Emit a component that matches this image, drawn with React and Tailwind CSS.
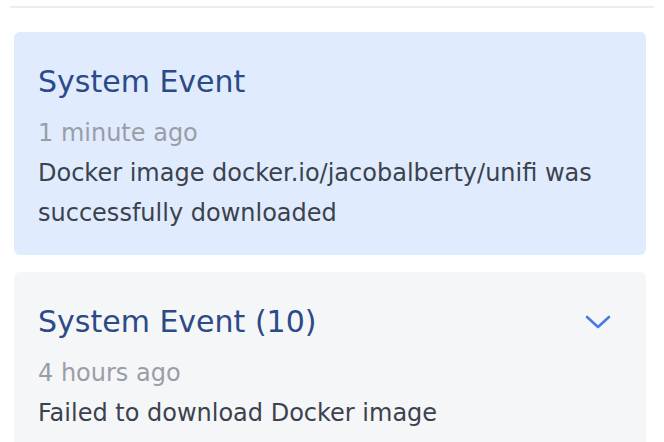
const events = [
  {
    title: "System Event",
    time: "1 minute ago",
    message: "Docker image docker.io/jacobalberty/unifi was successfully downloaded",
    highlight: true,
  },
  {
    title: "System Event (10)",
    time: "4 hours ago",
    message: "Failed to download Docker image",
    grouped: true,
  },
];

function ChevronDown() {
  return (
    <svg width="26" height="14" viewBox="0 0 26 14" fill="none" className="mr-[11px] shrink-0">
      <polyline
        points="2,2 13,12 24,2"
        stroke="#4a7be0"
        strokeWidth="2.6"
        strokeLinecap="round"
        strokeLinejoin="round"
      />
    </svg>
  );
}

export default function App() {
  return (
    <div className="w-[664px] h-[442px] overflow-hidden bg-white font-['DejaVu_Sans',sans-serif]">
      <div className="mx-[10px] mt-[6px] h-[2px] bg-[#eaedf2]" />

      <div className="ml-[14px] mr-[18px] mt-[24px] flex flex-col gap-[17px]">
        {events.map((event) => (
          <div
            key={event.title}
            className={`rounded-[6px] px-6 pt-[28px] pb-[22px] ${
              event.highlight ? "bg-[#e0ecfd]" : "bg-[#f5f6f8]"
            }`}
          >
            <div className="flex items-center justify-between mb-[9px]">
              <h2 className="text-[30px] leading-[44px] text-[#2c4a87]">{event.title}</h2>
              {event.grouped && <ChevronDown />}
            </div>
            <div className="text-[24px] leading-[40px] text-[#999ea6]">{event.time}</div>
            <p className="text-[24px] leading-[40px] text-[#3b424d]">{event.message}</p>
          </div>
        ))}
      </div>
    </div>
  );
}
